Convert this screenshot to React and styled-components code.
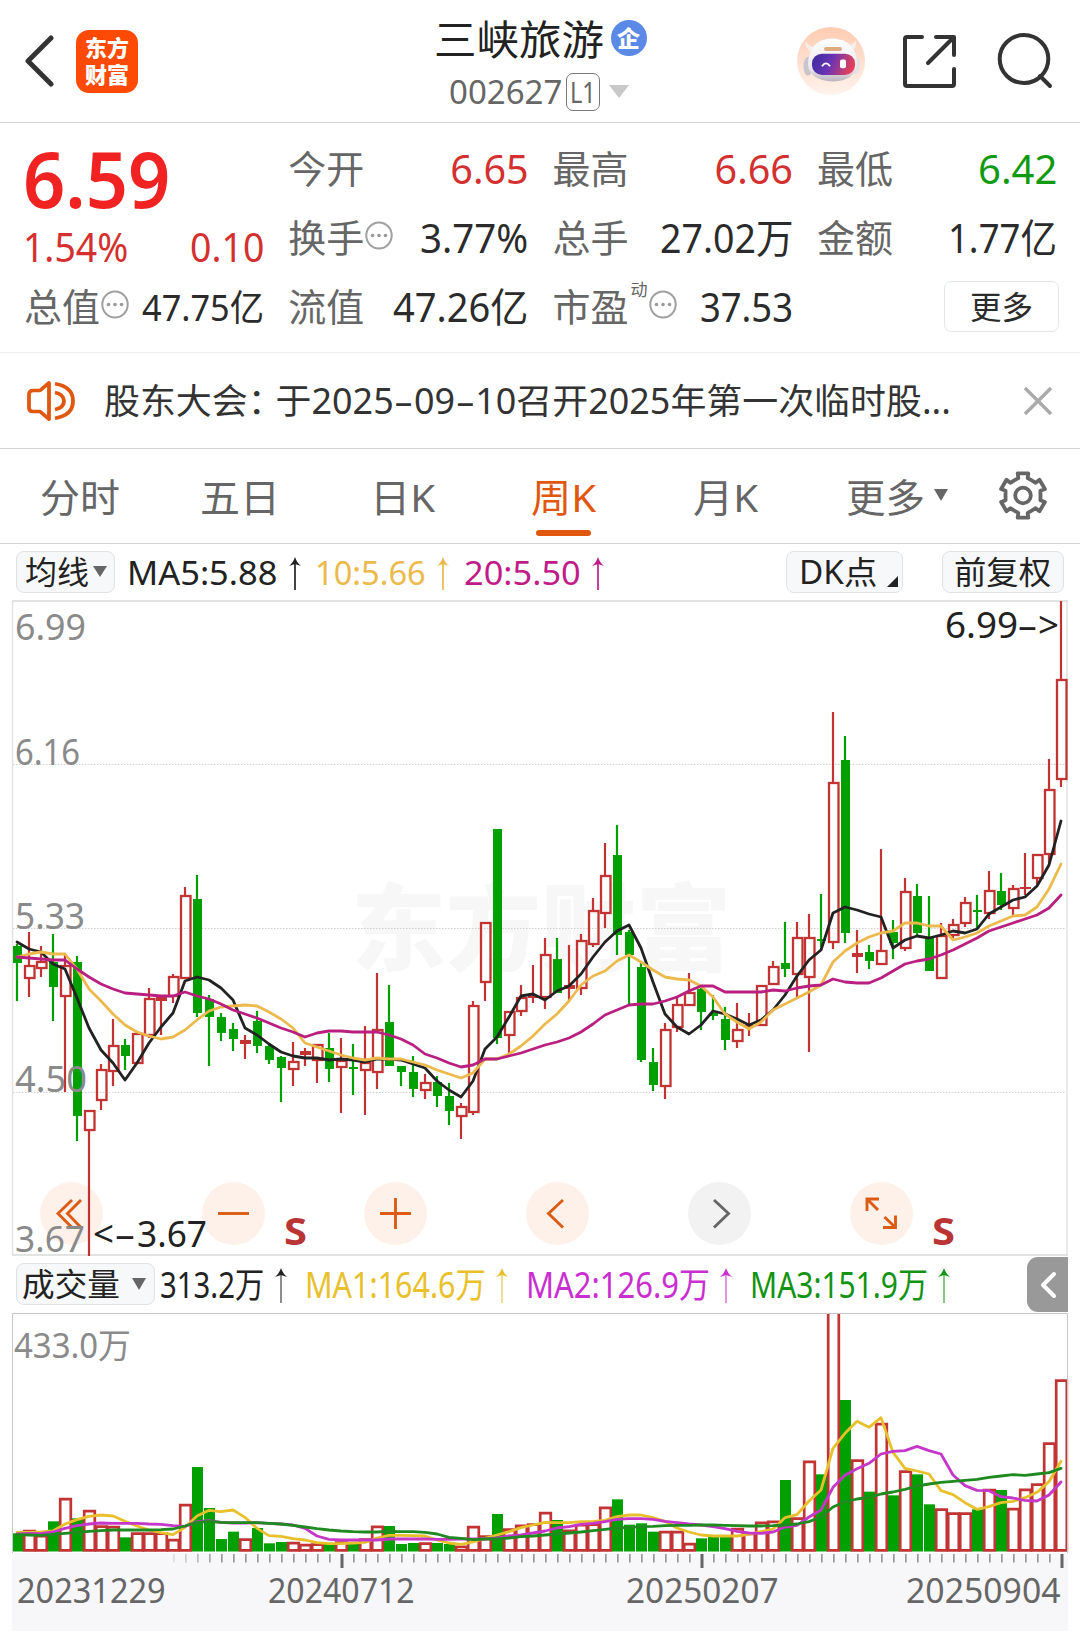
import React, { useLayoutEffect, useRef, useState } from "react";
import styled, { createGlobalStyle } from "styled-components";

const FONT = '"Noto Sans", "Noto Sans CJK SC", sans-serif';
const RED = "#d3302f";
const GREEN = "#00a000";
const ORANGE = "#e0570f";

const GlobalStyle = createGlobalStyle`
  * { box-sizing: border-box; }
  body { margin: 0; background: #fff; font-family: ${FONT}; }
  button { font: inherit; border: 0; padding: 0; background: none; color: inherit; }
`;

/* ---------- text that is squeezed to a known width ---------- */

const FitBox = styled.span`
  display: inline-block;
  flex: none;
  width: ${(p) => p.$w}px;
  line-height: 1;
  white-space: nowrap;
  font-size: ${(p) => p.$size}px;
  font-weight: ${(p) => p.$weight || 400};
  color: ${(p) => p.$color || "inherit"};
  margin-left: ${(p) => p.$ml || 0}px;
`;
const FitInner = styled.span`
  display: inline-block;
  transform-origin: 0 50%;
`;

function Fit({ w, size, color, weight, ml, children }) {
  const ref = useRef(null);
  const [scale, setScale] = useState(1);
  useLayoutEffect(() => {
    setScale(w / ref.current.offsetWidth);
  }, [w, size]);
  return (
    <FitBox $w={w} $size={size} $color={color} $weight={weight} $ml={ml}>
      <FitInner ref={ref} style={{ transform: `scaleX(${scale})` }}>
        {children}
      </FitInner>
    </FitBox>
  );
}

/* ---------- header ---------- */

const Page = styled.main`
  width: 1080px;
  height: 1642px;
  background: #fff;
  color: #2b2b2b;
  overflow: hidden;
`;
const Header = styled.header`
  display: grid;
  grid-template-columns: 1fr 260px 1fr;
  height: 123px;
  border-bottom: 1px solid #d2d2d2;
`;
const HeaderLeft = styled.div`
  display: flex;
  align-items: center;
  padding-left: 24px;
  gap: 21px;
`;
const Logo = styled.div`
  width: 62px;
  height: 63px;
  padding-bottom: 3px;
  border-radius: 13px;
  background: #ff4a05;
  color: #fff;
  display: flex;
  flex-direction: column;
  align-items: center;
  justify-content: center;
  gap: 4px;
  font: 900 22px/23px "Noto Sans CJK SC", sans-serif;
`;
const HeaderTitle = styled.div`
  display: flex;
  flex-direction: column;
  align-items: center;
  padding-top: 18px;
`;
const TitleRow = styled.div`
  display: flex;
  align-items: center;
  height: 44px;
  color: #222;
`;
const Badge = styled.span`
  width: 36px;
  height: 36px;
  margin: -4px 0 0 7px;
  border-radius: 50%;
  background: #5a89e6;
  color: #fff;
  text-align: center;
  font: 900 23px/35px "Noto Sans CJK SC", sans-serif;
`;
const CodeRow = styled.div`
  display: flex;
  align-items: center;
  height: 39px;
  margin: 10px 2px 0 0;
  color: #666;
`;
const Level = styled.span`
  display: flex;
  align-items: center;
  justify-content: center;
  width: 34px;
  height: 38px;
  margin-left: 4px;
  border: 1.5px solid #777;
  border-radius: 7px;
`;
const Caret = styled.i`
  flex: none;
  border-left: ${(p) => p.$w / 2}px solid transparent;
  border-right: ${(p) => p.$w / 2}px solid transparent;
  border-top: ${(p) => p.$h}px solid ${(p) => p.$color || "#666"};
  margin-left: ${(p) => p.$ml || 0}px;
  margin-top: ${(p) => p.$mt || 0}px;
`;
const HeaderRight = styled.div`
  display: flex;
  align-items: center;
  justify-content: flex-end;
  padding-right: 27px;
  svg { display: block; }
`;
const IconGap = styled.span`
  width: ${(p) => p.$w}px;
`;

function Robot() {
  return (
    <svg width="68" height="68" viewBox="0 0 68 71" preserveAspectRatio="none">
      <defs>
        <linearGradient id="halo" x1="0" y1="0" x2="0" y2="1">
          <stop offset="0" stopColor="#ffcbb2" />
          <stop offset="1" stopColor="#fff3ec" />
        </linearGradient>
        <linearGradient id="visor" x1="0" y1="0" x2="1" y2="0.2">
          <stop offset="0" stopColor="#3a2d9c" />
          <stop offset="0.5" stopColor="#6a35b5" />
          <stop offset="1" stopColor="#e0405c" />
        </linearGradient>
        <linearGradient id="shell" x1="0" y1="0" x2="0" y2="1">
          <stop offset="0" stopColor="#ffffff" />
          <stop offset="0.7" stopColor="#ece8ec" />
          <stop offset="1" stopColor="#b9b4bd" />
        </linearGradient>
      </defs>
      <ellipse cx="34" cy="35.5" rx="34" ry="35.5" fill="url(#halo)" />
      <path d="M8 15q0 9 8 12l6-6q-9 1-14-6zM59 14q1 9-6 13l-7-7q9 0 13-6z" fill="#f6edec" />
      <ellipse cx="11" cy="41" rx="4.5" ry="10" fill="#c9c5cc" />
      <ellipse cx="59" cy="40" rx="4" ry="9" fill="#e6e0e4" />
      <path d="M11 39Q12 13 35 12Q58 13 60 36Q60 56 36 57Q12 56 11 39z" fill="url(#shell)" />
      <rect x="27" y="21" width="18" height="4" rx="2" fill="#dfab80" />
      <rect x="15" y="28" width="43" height="22" rx="10" fill="url(#visor)" />
      <path d="M25 41q4-6 8 0" fill="none" stroke="#fff" strokeWidth="1.8" />
      <rect x="43" y="34" width="6" height="9" rx="2" fill="#fff" />
    </svg>
  );
}

function ShareIcon() {
  return (
    <svg width="55" height="54" viewBox="0 0 55 54" fill="none" stroke="#333" strokeWidth="4" strokeLinecap="round" strokeLinejoin="round">
      <path d="M20 3H5Q3 3 3 5v45q0 2 2 2h45q2 0 2-2V35M34 3h18v18M51 4L26 29" />
    </svg>
  );
}
function SearchIcon() {
  return (
    <svg width="56" height="56" viewBox="0 0 56 56" fill="none" stroke="#333" strokeWidth="4" strokeLinecap="round">
      <ellipse cx="27" cy="26" rx="24.3" ry="24" />
      <path d="M43 43l10 10" />
    </svg>
  );
}

/* ---------- quote ---------- */

const Quote = styled.section`
  display: grid;
  grid-template-columns: repeat(4, 240px);
  grid-template-rows: repeat(3, 69px);
  column-gap: 24.3px;
  height: 230px;
  padding: 12px 0 0 24px;
  border-bottom: 1px solid #eee;
`;
const PriceCell = styled.div`
  grid-row: span 2;
  display: flex;
  flex-direction: column;
  margin-left: -1px;
  color: ${RED};
`;
const PriceLine = styled.div`
  flex: none;
  height: 86px;
  padding-top: 5px;
`;
const Cell = styled.div`
  display: flex;
  align-items: center;
  justify-content: space-between;
  color: #2b2b2b;
`;
const ChangeLine = styled(Cell)`
  flex: none;
  height: 54px;
  color: ${RED};
`;
const Label = styled.span`
  display: flex;
  align-items: center;
  margin-top: -3px;
  color: #666;
  font-size: 38px;
  line-height: 1;
`;
const Small = styled.span`
  align-self: flex-start;
  font-size: 17px;
  line-height: 1;
  margin: -6px 0 0 2px;
`;
const MoreButton = styled.button`
  align-self: center;
  justify-self: end;
  display: flex;
  align-items: center;
  justify-content: center;
  width: 115px;
  height: 51px;
  margin: -2px -2.5px 0 0;
  border: 1.5px solid #e2e6e8;
  border-radius: 7px;
`;
const Dots = styled.svg`
  margin: -4px 0 0 1px;
`;

function InfoDots() {
  return (
    <Dots width="28" height="29" viewBox="0 0 28 29">
      <ellipse cx="14" cy="14.5" rx="12.7" ry="13" fill="none" stroke="#a0a0a0" strokeWidth="2" />
      {[7.5, 14, 20.5].map((x) => (
        <circle key={x} cx={x} cy="14.5" r="1.8" fill="#999" />
      ))}
    </Dots>
  );
}

function Stat({ label, info, sup, value, w, size = 39.5, color }) {
  return (
    <Cell>
      <Label>
        {label}
        {sup && <Small>{sup}</Small>}
        {info && <InfoDots />}
      </Label>
      <Fit w={w} size={size} color={color}>{value}</Fit>
    </Cell>
  );
}

/* ---------- notice ---------- */

const Notice = styled.section`
  display: flex;
  align-items: center;
  height: 96px;
  padding: 0 28px 0 26px;
  border-bottom: 1px solid #d2d2d2;
`;
const NoticeText = styled.p`
  flex: 1;
  display: flex;
  margin: 0 0 0 27px;
  color: #333;
`;
const Dash = styled.span`
  display: inline-block;
  width: 20px;
  text-align: center;
  transform: scaleX(1.7);
`;
const Colon = styled.span`
  margin-right: -8px;
`;

/* ---------- tabs ---------- */

const Tabs = styled.nav`
  display: flex;
  height: 95px;
  border-bottom: 1px solid #d2d2d2;
`;
const Tab = styled.button`
  display: flex;
  flex-direction: column;
  align-items: center;
  width: ${(p) => p.$w || 161}px;
  padding-top: 27px;
  color: ${(p) => (p.$active ? ORANGE : "#666")};
  &::after {
    content: "";
    width: 55px;
    height: 6px;
    margin-top: 14px;
    border-radius: 3px;
    background: ${(p) => (p.$active ? ORANGE : "transparent")};
  }
`;
const TabLabel = styled.span`
  display: flex;
  align-items: center;
  height: 40px;
  margin-left: ${(p) => p.$shift || 0}px;
`;
const GearButton = styled.button`
  display: flex;
  width: 48px;
  margin: 21px 0 0 10px;
  svg { display: block; }
`;

function gearPath() {
  const pts = [];
  const n = 6;
  for (let i = 0; i < n; i++) {
    const a = (i * 360) / n - 90;
    [[-27, 17.5], [-15, 18], [-13.5, 22.8], [13.5, 22.8], [15, 18], [27, 17.5]].forEach(([d, r]) => {
      const t = ((a + d) * Math.PI) / 180;
      pts.push(`${(24 + r * Math.cos(t)).toFixed(1)},${(25.5 + r * Math.sin(t)).toFixed(1)}`);
    });
  }
  return `M${pts.join("L")}Z`;
}
function Gear() {
  return (
    <svg width="48" height="51" viewBox="0 0 48 51" fill="none" stroke="#666" strokeWidth="3.8" strokeLinejoin="round">
      <path d={gearPath()} />
      <circle cx="24" cy="25.5" r="7.8" />
    </svg>
  );
}

/* ---------- indicator bars ---------- */

const IndicatorBar = styled.div`
  display: flex;
  align-items: flex-start;
  height: ${(p) => p.$h}px;
  padding: 7px 12px 0 16px;
`;
const Chip = styled.button`
  display: flex;
  flex: none;
  align-items: center;
  width: ${(p) => p.$w}px;
  height: 42px;
  padding-left: ${(p) => p.$pl}px;
  margin-left: ${(p) => p.$ml || 0}px;
  border: 1.5px solid #e0e2e4;
  border-radius: 8px;
  background: #f7f8fa;
  color: #222;
`;
const Reading = styled.span`
  display: flex;
  align-items: center;
  height: 44px;
  margin-left: ${(p) => p.$ml}px;
  color: ${(p) => p.$color};
`;
const Corner = styled.i`
  width: 0;
  align-self: flex-end;
  margin: 0 0 5px 11px;
  border-left: 11px solid transparent;
  border-bottom: 11px solid #222;
`;
const Collapse = styled.button`
  display: flex;
  align-items: center;
  justify-content: center;
  width: 41px;
  height: 55px;
  margin: -6px 0 0 auto;
  border-radius: 11px 0 0 11px;
  background: #999;
`;
const Arrow = styled.svg`
  margin-left: ${(p) => p.$ml}px;
`;

function UpArrow({ ml, o = 1, h = 33 }) {
  return (
    <Arrow $ml={ml} width="12" height={h} viewBox={`0 0 12 ${h}`}>
      <path d="M6 0Q8 6 12 9L6 7L0 9Q4 6 6 0z" fill="currentColor" />
      <path d={`M6 4V${h}`} stroke="currentColor" strokeWidth="1.7" opacity={o} />
    </Arrow>
  );
}

/* ---------- chart data ---------- */

const xOf = (i) => 17 + 12 * i;

// [rising, high, bodyTop, bodyBottom, low] on the chart's vertical scale
const CANDLES = [
  [0,944,946,963,1001],[1,932,966,978,997],[1,946,962,968,977],[0,934,962,987,1021],[1,955,966,996,1092],
  [0,956,962,1116,1141],[1,1110,1111,1130,1256],[1,1064,1070,1100,1110],[1,1019,1046,1071,1086],[0,1039,1045,1056,1070],
  [1,1033,1034,1063,1063],[1,988,999,1035,1038],[1,996,997,1001,1035],[1,974,977,996,1003],[1,887,896,978,978],
  [0,875,899,1013,1017],[0,995,999,1017,1066],[0,1013,1017,1033,1041],[0,1023,1029,1039,1051],[1,1035,1040,1044,1059],
  [0,1011,1021,1046,1053],[0,1045,1046,1060,1064],[0,1056,1057,1068,1102],[1,1042,1062,1069,1086],[1,1048,1051,1055,1066],
  [1,1044,1045,1060,1083],[0,1033,1048,1069,1082],[1,1038,1061,1067,1113],[0,1044,1067,1069,1095],[1,1026,1063,1070,1115],
  [1,973,1030,1072,1089],[0,985,1022,1066,1066],[0,1066,1066,1072,1086],[0,1056,1072,1089,1097],[1,1074,1083,1090,1099],
  [0,1076,1082,1096,1107],[0,1083,1096,1111,1125],[1,1103,1107,1116,1139],[1,1001,1006,1112,1115],[1,923,923,982,1001],
  [0,829,829,1038,1044],[1,1011,1012,1035,1054],[1,985,998,1011,1016],[1,965,996,998,1003],[1,938,955,997,1009],
  [0,938,959,993,993],[1,945,985,989,1000],[1,934,941,988,995],[1,898,911,944,947],[1,843,876,913,928],
  [0,825,855,935,955],[0,930,932,955,1006],[0,962,967,1060,1062],[0,1048,1062,1085,1091],[1,1023,1030,1086,1099],
  [1,997,1005,1027,1032],[1,973,993,1005,1005],[0,988,989,1012,1030],[0,995,1013,1016,1020],[0,1007,1019,1040,1050],
  [1,1003,1030,1041,1048],[1,1013,1025,1027,1036],[1,985,986,1025,1025],[1,961,967,984,984],[0,922,963,969,977],
  [1,922,938,974,997],[1,914,938,977,1052],[0,894,939,941,947],[1,712,783,942,949],[0,736,760,933,943],
  [1,930,953,957,973],[0,945,952,961,969],[1,849,951,964,964],[0,920,932,943,959],[1,878,892,948,951],
  [0,884,896,933,937],[0,896,937,971,971],[1,923,936,978,978],[1,919,925,935,938],[1,897,903,923,927],
  [0,895,910,912,929],[1,871,891,913,919],[0,873,891,905,910],[1,885,889,908,915],[1,853,887,889,895],
  [1,854,855,878,884],[1,759,790,854,863],[1,601,680,779,787],
];
const MA5 = [942,949,952,964,969,998,1028,1050,1063,1080,1063,1043,1027,1013,981,977,980,988,1000,1028,1035,1044,1052,1056,1058,1058,1060,1059,1060,1062,1059,1059,1060,1064,1068,1081,1090,1097,1081,1049,1037,1017,996,994,1000,991,986,974,957,942,931,925,948,982,1014,1027,1034,1025,1011,1014,1019,1025,1020,1010,995,976,960,950,913,907,910,914,917,948,940,936,938,935,931,933,929,914,907,900,897,886,865,821];
const MA10 = [957,954,952,954,954,969,989,1001,1014,1025,1032,1036,1039,1037,1030,1020,1011,1007,1006,1005,1006,1012,1019,1028,1043,1047,1051,1055,1058,1060,1058,1059,1059,1062,1065,1070,1074,1078,1073,1059,1059,1054,1046,1036,1024,1014,1001,985,976,971,961,955,962,970,977,979,980,986,997,1014,1022,1029,1022,1010,1004,998,992,985,962,951,943,937,933,931,923,923,926,926,940,937,933,926,921,916,915,907,889,864];
const MA20 = [957,958,959,960,960,969,977,984,989,993,994,995,996,996,992,996,999,1004,1010,1014,1018,1023,1028,1032,1037,1033,1031,1031,1032,1032,1032,1035,1039,1045,1054,1058,1063,1067,1065,1059,1059,1056,1053,1049,1045,1042,1038,1032,1024,1015,1010,1005,1004,1004,1001,997,991,986,986,992,992,992,992,990,991,988,986,985,979,982,983,983,978,971,964,961,959,955,950,944,938,931,927,923,919,915,908,895];

// volume readings, counted downwards in thirds of a pixel from y = 1380
const vy = (v) => 1380 + v / 3;
const VOLUMES = [460,450,465,424,354,415,390,436,438,472,457,457,457,477,372,261,384,477,455,475,444,490,486,486,492,490,492,484,490,475,437,438,492,489,487,489,492,497,438,466,402,445,434,430,396,420,449,432,430,380,358,434,430,455,453,453,489,475,470,466,444,458,425,422,300,412,242,283,-220,60,238,335,129,346,271,283,373,385,397,397,388,327,330,384,326,310,187,-2];
const VMA1 = [457,457,456,453,432,419,409,405,408,424,438,450,458,464,442,408,391,395,390,412,445,467,469,476,480,488,491,491,489,487,474,466,466,467,468,480,489,493,486,475,465,455,443,435,427,428,428,425,424,421,410,405,405,413,424,444,456,465,468,468,468,463,455,447,413,404,363,330,205,160,124,142,113,217,265,273,282,332,344,368,388,380,368,364,353,337,305,244];
const VMA2 = [462,460,461,456,445,437,432,429,430,430,430,432,433,437,439,425,422,427,429,429,428,430,432,435,445,468,478,480,480,480,480,477,477,477,477,478,478,477,477,477,474,468,465,459,453,444,440,433,430,425,418,416,416,418,424,428,432,435,440,446,454,459,460,456,441,436,411,390,322,286,266,250,222,214,212,199,212,222,285,317,331,332,350,354,361,363,345,306];
const VMA3 = [464,465,466,463,460,457,454,452,450,450,450,450,449,447,438,427,424,427,428,428,428,430,432,436,441,446,450,453,455,456,456,454,455,455,457,462,472,475,479,477,477,474,470,468,465,462,459,456,452,448,444,442,440,439,437,436,436,435,435,436,437,438,438,437,435,432,425,411,381,365,357,352,342,336,328,318,312,307,304,301,298,292,288,284,286,282,278,265];

const points = (list, f = (v) => v) => list.map((v, i) => `${xOf(i)},${f(v)}`).join(" ");

/* ---------- charts ---------- */

const ChartArea = styled.section`
  position: relative;
  height: ${(p) => p.$h}px;
`;
const ChartSvg = styled.svg`
  position: relative;
  display: block;
  overflow: visible;
  font-family: ${FONT};
  polyline { fill: none; stroke-width: 2.8; stroke-linejoin: round; stroke-linecap: round; }
`;
const ChartText = styled.text`
  fill: ${(p) => p.$fill || "#8a8a8a"};
  font-size: ${(p) => p.$size || 36}px;
  font-weight: ${(p) => p.$weight || 400};
`;
const Watermark = styled.text`
  fill: #f7f7f7;
  font: 900 95px "Noto Sans CJK SC", sans-serif;
`;
const Controls = styled.div`
  position: absolute;
  left: 40px;
  top: 582px;
  display: flex;
  gap: 99px;
`;
const RoundButton = styled.button`
  width: 63px;
  height: 63px;
  border-radius: 50%;
  background: ${(p) => (p.$muted ? "#f2f2f2" : "#fef1ea")};
  svg { display: block; }
`;
const CONTROL_PATHS = [
  "M32 19L18 32.5L32 46.5M41 19L27.5 32.5L41 46.5",
  "M16 32.5H47",
  "M16 32.5H47M31.5 17V48",
  "M37 19L22.5 32.5L37 46.5",
  "M26 19L40.5 32.5L26 46.5",
  "M29 18H17V30M17.500 18.500L28 29M33 46.500H45.500V34.500M45 46L34.500 36",
];

// [x, baseline, width, text, colour]
const PRICE_LABELS = [
  [15, 640, 71, "6.99"],
  [15, 765, 65, "6.16"],
  [15, 929, 70, "5.33"],
  [15, 1092, 72, "4.50"],
  [15, 1252, 70, "3.67"],
  [945, 638, 73, "6.99", "#222"],
  [1017, 638, 21, "-", "#222"],
  [1038, 638, 21, ">", "#222"],
  [93, 1247, 21, "<", "#222"],
  [114, 1247, 22, "-", "#222"],
  [137, 1247, 70, "3.67", "#222"],
];

function PriceChart() {
  return (
    <ChartArea $h={656}>
      <Controls>
        {CONTROL_PATHS.map((d, i) => (
          <RoundButton key={i} $muted={i === 4}>
            <svg width="63" height="63" viewBox="0 1 63 63" fill="none" stroke={i === 4 ? "#666" : "#dc5c16"} strokeWidth="2.9">
              <path d={d} />
            </svg>
          </RoundButton>
        ))}
      </Controls>
      <ChartSvg width="1080" height="656" viewBox="0 600 1080 656">
        <Watermark x="351" y="964" textLength="380">东方财富</Watermark>
        {[764.5, 928.5, 1092.5].map((y) => (
          <path key={y} d={`M13 ${y}H1066`} stroke="#cfcfcf" strokeWidth="1" strokeDasharray="1.5 1.5" />
        ))}
        <path d="M12 601H1068M12 1255H1068" stroke="#e3e3e3" strokeWidth="2" />
        <path d="M12.5 601V1255M1067 601V1255" stroke="#e3e3e3" strokeWidth="1.5" />
        {CANDLES.map(([up, hi, top, bot, lo], i) => {
          const x = xOf(i);
          if (!up) {
            return (
              <g key={i} fill={GREEN}>
                <rect x={x - 1.1} y={hi} width="2.2" height={lo - hi} />
                <rect x={x - 4} y={top} width="9" height={Math.max(bot - top, 2)} />
              </g>
            );
          }
          const h = bot - top;
          return (
            <g key={i} fill="#c23434">
              <rect x={x - 1.1} y={hi} width="2.2" height={Math.max(top - hi, 0)} />
              <rect x={x - 1.1} y={bot} width="2.2" height={Math.max(lo - bot, 0)} />
              {h < 5 ? (
                <rect x={x - 5} y={top} width="11" height={h} />
              ) : (
                <rect x={x - 4} y={top} width="9.5" height={h} fill="none" stroke="#c23434" strokeWidth="2.3" />
              )}
            </g>
          );
        })}
        <polyline points={points(MA5)} stroke="#222" />
        <polyline points={points(MA10)} stroke="#ecb94d" />
        <polyline points={points(MA20)} stroke="#b91f80" />
        {PRICE_LABELS.map(([x, y, w, t, c]) => (
          <ChartText key={`${x}-${y}`} x={x} y={y} textLength={w} lengthAdjust="spacingAndGlyphs" $fill={c}>{t}</ChartText>
        ))}
        {[284, 932].map((x) => (
          <ChartText key={x} x={x} y="1245" textLength="23" lengthAdjust="spacingAndGlyphs" $size={37} $weight={700} $fill="#b93434">S</ChartText>
        ))}
      </ChartSvg>
    </ChartArea>
  );
}

function VolumeChart() {
  return (
    <ChartArea $h={240}>
      <ChartSvg width="1080" height="240" viewBox="0 1313 1080 240">
        {VOLUMES.map((v, i) => {
          const x = xOf(i);
          const open = vy(v) < 1313;
          const y = open ? 1314 : vy(v);
          const w = 10.6;
          if (!CANDLES[i][0]) {
            return <rect key={i} x={x - 5} y={y} width="11" height={1551.5 - y} fill={GREEN} />;
          }
          return (
            <path
              key={i}
              d={open
                ? `M${x - 4.8} ${y}V1550.300h${w}V${y}`
                : `M${x - 4.8} ${y + 1.2}V1550.300h${w}V${y + 1.2}Z`}
              fill="#fff"
              stroke="#c23434"
              strokeWidth="2.7"
            />
          );
        })}
        <path d="M12.5 1553V1313.5H1067.5V1553" fill="none" stroke="#c8c8c8" />
        <polyline points={points(VMA1, vy)} stroke="#e8c02c" />
        <polyline points={points(VMA2, vy)} stroke="#c437c8" />
        <polyline points={points(VMA3, vy)} stroke="#1f8a1f" />
        <ChartText x="14" y="1358" textLength="117" lengthAdjust="spacingAndGlyphs" $size={34}>433.0万</ChartText>
      </ChartSvg>
    </ChartArea>
  );
}

const Axis = styled.footer`
  width: 1056px;
  height: 78px;
  margin-left: 12px;
  background: #f7f7fa;
  color: #666;
`;
const Dates = styled.div`
  display: flex;
  padding: 4px 0 0 5px;
`;
const AxisTicks = styled.svg`
  display: block;
`;

function TimeAxis() {
  const ticks = Array.from({ length: 75 }, (_, k) => 174 + 12 * k);
  const major = [342, 702, 1062];
  return (
    <Axis>
      <AxisTicks width="1056" height="16" viewBox="12 1553 1056 16">
        {ticks.map((x, k) => {
          const m = major.includes(x);
          return (
            <rect
              key={x}
              x={x - (m ? 1.5 : 1)}
              y="1554"
              width={m ? 3 : 1.7}
              height={m ? 14 : 8.5}
              fill={m ? "#666" : "#999"}
              opacity={Math.min(1, 0.25 + k * 0.2)}
            />
          );
        })}
      </AxisTicks>
      <Dates>
        <Fit w={149} size={34}>20231229</Fit>
        <Fit w={147} size={34} ml={102}>20240712</Fit>
        <Fit w={153} size={34} ml={211}>20250207</Fit>
        <Fit w={155} size={34} ml={127}>20250904</Fit>
      </Dates>
    </Axis>
  );
}

export default function App() {
  return (
    <Page>
      <GlobalStyle />
      <Header>
        <HeaderLeft>
          <svg width="31" height="53" viewBox="0 0 31 53" fill="none" stroke="#333" strokeWidth="5" strokeLinecap="round" strokeLinejoin="round">
            <path d="M27 3L4 26L27 49" />
          </svg>
          <Logo>
            <span>东方</span>
            <span>财富</span>
          </Logo>
        </HeaderLeft>
        <HeaderTitle>
          <TitleRow>
            <Fit w={170} size={40.5}>三峡旅游</Fit>
            <Badge>企</Badge>
          </TitleRow>
          <CodeRow>
            <Fit w={113} size={33}>002627</Fit>
            <Level><Fit w={26} size={29}>L1</Fit></Level>
            <Caret $w={20} $h={13} $color="#c8c8c8" $ml={9} />
          </CodeRow>
        </HeaderTitle>
        <HeaderRight>
          <Robot />
          <IconGap $w={37} />
          <ShareIcon />
          <IconGap $w={40} />
          <SearchIcon />
        </HeaderRight>
      </Header>

      <Quote>
        <PriceCell>
          <PriceLine>
            <Fit w={147} size={77} weight={600} color="#f02222">6.59</Fit>
          </PriceLine>
          <ChangeLine>
            <Fit w={105} size={39.5}>1.54%</Fit>
            <Fit w={74} size={39.5}>0.10</Fit>
          </ChangeLine>
        </PriceCell>
        <Stat label="今开" value="6.65" w={78} color={RED} />
        <Stat label="最高" value="6.66" w={78} color={RED} />
        <Stat label="最低" value="6.42" w={79} color="#0f9a0f" />
        <Stat label="换手" info value="3.77%" w={108} />
        <Stat label="总手" value="27.02万" w={133} />
        <Stat label="金额" value="1.77亿" w={109} />
        <Stat label="总值" info value="47.75亿" w={122} size={36} />
        <Stat label="流值" value="47.26亿" w={135} />
        <Stat label="市盈" sup="动" info value="37.53" w={93} />
        <MoreButton><Fit w={63} size={32}>更多</Fit></MoreButton>
      </Quote>

      <Notice>
        <svg width="51" height="42" viewBox="0 0 51 44" preserveAspectRatio="none" fill="none" stroke={ORANGE} strokeWidth="3.8" strokeLinejoin="round">
          <path d="M23 3L14 11H7Q3 11 3 15V29Q3 33 7 33H14L23 41Z" />
          <path d="M29 4Q47 7 47 22Q47 37 29 40M29 13Q38 15 38 22Q38 29 29 31" />
        </svg>
        <NoticeText>
          <Fit w={847} size={35.5}>
            股东大会<Colon>：</Colon>于2025<Dash>-</Dash>09<Dash>-</Dash>10召开2025年第一次临时股...
          </Fit>
        </NoticeText>
        <svg width="28" height="28" viewBox="0 0 28 28" stroke="#aaa" strokeWidth="3.4">
          <path d="M1 1L27 27M27 1L1 27" />
        </svg>
      </Notice>

      <Tabs>
        <Tab><TabLabel $shift={-3}><Fit w={80} size={39}>分时</Fit></TabLabel></Tab>
        <Tab><TabLabel $shift={-4}><Fit w={80} size={39}>五日</Fit></TabLabel></Tab>
        <Tab><TabLabel $shift={-1}><Fit w={65} size={39}>日K</Fit></TabLabel></Tab>
        <Tab $active><TabLabel $shift={-2}><Fit w={65} size={39}>周K</Fit></TabLabel></Tab>
        <Tab><TabLabel><Fit w={65} size={39}>月K</Fit></TabLabel></Tab>
        <Tab $w={184}>
          <TabLabel>
            <Fit w={79} size={39}>更多</Fit>
            <Caret $w={14} $h={12} $ml={9} $mt={-2} />
          </TabLabel>
        </Tab>
        <GearButton><Gear /></GearButton>
      </Tabs>

      <IndicatorBar $h={56}>
        <Chip $w={99} $pl={8}>
          <Fit w={64} size={32}>均线</Fit>
          <Caret $w={14} $h={11} $ml={4} $mt={-1} />
        </Chip>
        <Reading $ml={12} $color="#222"><Fit w={150} size={33.5}>MA5:5.88</Fit><UpArrow ml={12} /></Reading>
        <Reading $ml={14} $color="#ecb94d"><Fit w={111} size={33.5}>10:5.66</Fit><UpArrow ml={11} /></Reading>
        <Reading $ml={15} $color="#bf1c88"><Fit w={117} size={33.5}>20:5.50</Fit><UpArrow ml={11} /></Reading>
        <Chip $w={117} $pl={11} $ml={182}>
          <Fit w={78} size={32}>DK点</Fit>
          <Corner />
        </Chip>
        <Chip $w={122} $pl={11} $ml={39}><Fit w={97} size={32}>前复权</Fit></Chip>
      </IndicatorBar>

      <PriceChart />

      <IndicatorBar $h={57}>
        <Chip $w={139} $pl={4}>
          <Fit w={98} size={32}>成交量</Fit>
          <Caret $w={14} $h={12} $ml={13} />
        </Chip>
        <Reading $ml={5} $color="#222"><Fit w={104} size={35.5}>313.2万</Fit><UpArrow ml={11} o={0.6} h={35} /></Reading>
        <Reading $ml={18} $color="#e8c02c"><Fit w={181} size={35.5}>MA1:164.6万</Fit><UpArrow ml={10} o={0.6} h={35} /></Reading>
        <Reading $ml={18} $color="#c92fd0"><Fit w={184} size={35.5}>MA2:126.9万</Fit><UpArrow ml={10} o={0.6} h={35} /></Reading>
        <Reading $ml={18} $color="#139313"><Fit w={178} size={35.5}>MA3:151.9万</Fit><UpArrow ml={10} o={0.6} h={35} /></Reading>
        <Collapse>
          <svg width="18" height="28" viewBox="0 0 18 28" fill="none" stroke="#fff" strokeWidth="4" strokeLinecap="round" strokeLinejoin="round">
            <path d="M15 3L4 14L15 25" />
          </svg>
        </Collapse>
      </IndicatorBar>

      <VolumeChart />
      <TimeAxis />
    </Page>
  );
}
